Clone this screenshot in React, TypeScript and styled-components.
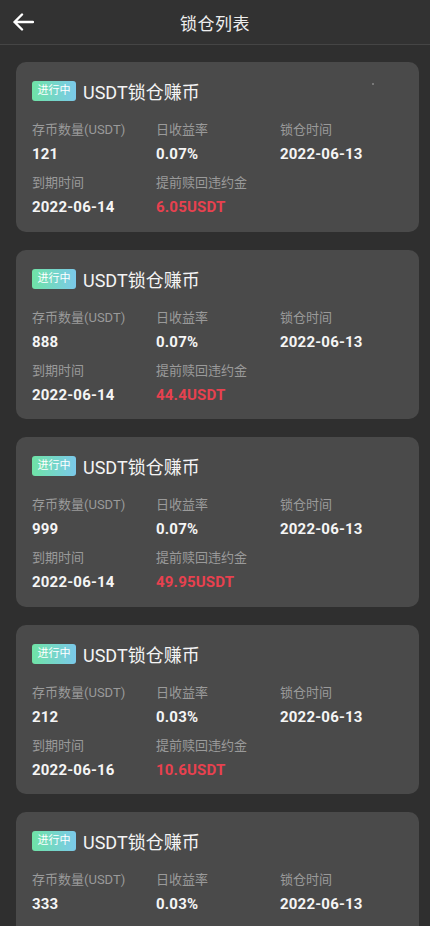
import React from 'react';
import styled, { createGlobalStyle } from 'styled-components';

const GlobalStyle = createGlobalStyle`
  html, body {
    margin: 0;
    padding: 0;
    background: #2f2f2f;
  }
  body {
    font-family: Roboto, "Noto Sans CJK SC", sans-serif;
    color: #fff;
  }
`;

const Page = styled.div`
  width: 430px;
  min-height: 926px;
  background: #2f2f2f;
`;

const Header = styled.header`
  height: 44px;
  background: #323232;
  border-bottom: 1px solid #454545;
  display: flex;
  align-items: center;
  justify-content: center;
  position: relative;
`;

const BackButton = styled.button`
  position: absolute;
  left: 11px;
  top: 10px;
  width: 24px;
  height: 24px;
  padding: 0;
  border: none;
  background: none;
  display: flex;
  align-items: center;
  justify-content: center;
`;

const Title = styled.h1`
  margin: 0;
  font-size: 17px;
  font-weight: 400;
  color: #eee;
  letter-spacing: 0.5px;
`;

const List = styled.div`
  padding: 17px 11px 0 16px;
  display: flex;
  flex-direction: column;
  gap: 18px;
`;

const Card = styled.div`
  background: #4a4a4a;
  border-radius: 10px;
  padding: 18px 16px 13.5px;
  position: relative;
`;

const Dot = styled.span`
  position: absolute;
  top: 21px;
  right: 45px;
  width: 2px;
  height: 2px;
  border-radius: 50%;
  background: #888;
`;

const CardHead = styled.div`
  display: flex;
  align-items: center;
  gap: 7px;
  height: 22px;
  margin-bottom: 18px;
`;

const Badge = styled.span`
  height: 20px;
  padding: 0 5.5px;
  border-radius: 3px;
  background: linear-gradient(90deg, #6fe3a6 0%, #7bc9ea 100%);
  color: #fff;
  font-size: 11px;
  line-height: 20px;
`;

const CardTitle = styled.span`
  font-size: 18px;
  color: #f4f4f4;
`;

const Grid = styled.div`
  display: grid;
  grid-template-columns: 124px 124px 1fr;
  row-gap: 8px;
`;

const Cell = styled.div`
  display: flex;
  flex-direction: column;
`;

const Label = styled.span`
  font-size: 13px;
  line-height: 20px;
  color: #9a9a9a;
  white-space: nowrap;
`;

const Value = styled.span<{ $red?: boolean }>`
  margin-top: 3px;
  font-size: 15px;
  line-height: 22px;
  font-weight: 700;
  letter-spacing: 0.2px;
  color: ${p => (p.$red ? '#e8414f' : '#f5f5f5')};
`;

type Item = {
  amount: string;
  rate: string;
  start: string;
  end: string;
  penalty: string;
};

const items: Item[] = [
  { amount: '121', rate: '0.07%', start: '2022-06-13', end: '2022-06-14', penalty: '6.05USDT' },
  { amount: '888', rate: '0.07%', start: '2022-06-13', end: '2022-06-14', penalty: '44.4USDT' },
  { amount: '999', rate: '0.07%', start: '2022-06-13', end: '2022-06-14', penalty: '49.95USDT' },
  { amount: '212', rate: '0.03%', start: '2022-06-13', end: '2022-06-16', penalty: '10.6USDT' },
  { amount: '333', rate: '0.03%', start: '2022-06-13', end: '2022-06-16', penalty: '16.65USDT' },
];

const App: React.FC = () => {
  return (
    <Page>
      <GlobalStyle />
      <Header>
        <BackButton>
          <svg width="22" height="18" viewBox="0 0 22 18" fill="none">
            <path d="M10 1.5 2.5 9l7.5 7.5M2.5 9H21" stroke="#fff" strokeWidth="2.4" strokeLinecap="round" strokeLinejoin="round" />
          </svg>
        </BackButton>
        <Title>锁仓列表</Title>
      </Header>
      <List>
        {items.map((it, i) => (
          <Card key={i}>
            {i === 0 && <Dot />}
            <CardHead>
              <Badge>进行中</Badge>
              <CardTitle>USDT锁仓赚币</CardTitle>
            </CardHead>
            <Grid>
              <Cell>
                <Label>存币数量(USDT)</Label>
                <Value>{it.amount}</Value>
              </Cell>
              <Cell>
                <Label>日收益率</Label>
                <Value>{it.rate}</Value>
              </Cell>
              <Cell>
                <Label>锁仓时间</Label>
                <Value>{it.start}</Value>
              </Cell>
              <Cell>
                <Label>到期时间</Label>
                <Value>{it.end}</Value>
              </Cell>
              <Cell>
                <Label>提前赎回违约金</Label>
                <Value $red>{it.penalty}</Value>
              </Cell>
            </Grid>
          </Card>
        ))}
      </List>
    </Page>
  );
};

export default App;
